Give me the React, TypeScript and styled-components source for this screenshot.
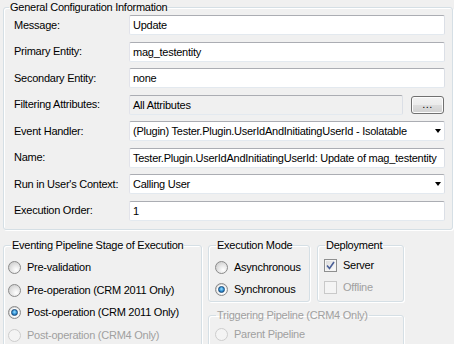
import type { FC, ReactNode } from 'react';
import styled, { createGlobalStyle } from 'styled-components';

const GlobalStyle = createGlobalStyle`
  html, body {
    margin: 0;
    padding: 0;
    background: #f0f0f0;
  }
  body {
    font-family: "Liberation Sans", Arial, sans-serif;
    font-size: 11px;
    letter-spacing: -0.25px;
    color: #000;
  }
`;

const Page = styled.div`
  width: 454px;
  height: 344px;
  overflow: hidden;
  box-sizing: border-box;
  padding: 1px 1px 0 3px;
  background: #f0f0f0;
`;

const Group = styled.fieldset<{ $width?: number }>`
  margin: 0;
  padding: 0;
  min-width: 0;
  box-sizing: border-box;
  border: 1px solid #d5dfe5;
  border-radius: 3px;
  box-shadow: inset 1px 1px 0 #fff, 1px 1px 0 #fff;
  ${(p) => (p.$width ? `width: ${p.$width}px; flex: none;` : '')}
`;

const Legend = styled.legend<{ $indent?: number; $disabled?: boolean }>`
  margin-left: ${(p) => p.$indent ?? 7}px;
  padding: 0 1px;
  line-height: 13px;
  height: 13px;
  color: ${(p) => (p.$disabled ? '#a0a0a0' : '#000')};
`;

const FormGrid = styled.div`
  display: grid;
  grid-template-columns: 115px 1fr;
  grid-auto-rows: 20px;
  row-gap: 6.5px;
  padding: 1px 7px 8px 10px;
  align-items: center;
`;

const Label = styled.div`
  line-height: 13px;
  white-space: nowrap;
`;

const TextBox = styled.div<{ $readOnly?: boolean }>`
  height: 20px;
  box-sizing: border-box;
  border: 1px solid;
  border-color: #abadb3 #dbdfe6 #e3e9ef #e2e3ea;
  border-radius: 2px;
  background: ${(p) => (p.$readOnly ? '#f0f0f0' : '#fff')};
  padding: 0 3px;
  display: flex;
  align-items: center;
  white-space: nowrap;
  overflow: hidden;
  min-width: 0;
  flex: 1;
`;

const ComboBox = styled(TextBox)`
  justify-content: space-between;
  padding-right: 3px;
`;

const Arrow = styled.span`
  width: 0;
  height: 0;
  border-left: 3.5px solid transparent;
  border-right: 3.5px solid transparent;
  border-top: 4px solid #000;
  flex: none;
`;

const Inline = styled.div`
  display: flex;
  align-items: center;
  gap: 8px;
  min-width: 0;
`;

const Button = styled.div`
  flex: none;
  width: 33px;
  height: 18px;
  margin-right: 1px;
  box-sizing: border-box;
  border: 1px solid #707070;
  border-radius: 3px;
  background: linear-gradient(#f2f2f2 0%, #ebebeb 50%, #dddddd 51%, #cfcfcf 100%);
  box-shadow: inset 0 0 0 1px #fcfcfc;
  text-align: center;
  line-height: 15px;
  letter-spacing: 0.5px;
`;

const Bottom = styled.div`
  display: flex;
  gap: 6px;
  margin-top: 9px;
  align-items: flex-start;
`;

const RightColumn = styled.div`
  display: flex;
  flex-direction: column;
  gap: 7px;
  width: 196px;
  flex: none;
`;

const TopRow = styled.div`
  display: flex;
  gap: 7px;
`;

const OptionList = styled.div<{ $padTop: number; $padLeft: number; $padBottom?: number; $row: number }>`
  display: grid;
  grid-auto-rows: ${(p) => p.$row}px;
  padding: ${(p) => p.$padTop}px 4px ${(p) => p.$padBottom ?? 0}px ${(p) => p.$padLeft}px;
  align-items: center;
`;

const Option = styled.div<{ $disabled?: boolean }>`
  display: flex;
  align-items: center;
  gap: 6px;
  white-space: nowrap;
  color: ${(p) => (p.$disabled ? '#a0a0a0' : '#000')};
  line-height: 13px;
`;

const RadioCircle = styled.span<{ $checked?: boolean; $disabled?: boolean }>`
  flex: none;
  width: 13px;
  height: 13px;
  box-sizing: border-box;
  border-radius: 50%;
  border: 1px solid ${(p) => (p.$disabled ? '#cdcdcd' : '#8a8a8a')};
  background: ${(p) =>
    p.$disabled
      ? '#f4f4f4'
      : 'radial-gradient(circle at 65% 70%, #ffffff 0%, #e6e6e6 45%, #c4c4c4 100%)'};
  display: flex;
  align-items: center;
  justify-content: center;

  &::after {
    content: '';
    display: ${(p) => (p.$checked ? 'block' : 'none')};
    width: 7px;
    height: 7px;
    box-sizing: border-box;
    border-radius: 50%;
    border: 1px solid #1c4f7e;
    background: radial-gradient(circle at 50% 40%, #9be0ff 0%, #2f8fd4 55%, #0e4b86 100%);
    box-shadow: 0 0 0 1px #fff;
  }
`;

const CheckBox = styled.span<{ $checked?: boolean; $disabled?: boolean }>`
  flex: none;
  width: 13px;
  height: 13px;
  box-sizing: border-box;
  border: 1px solid ${(p) => (p.$disabled ? '#c9c9c9' : '#8e8f8f')};
  background: ${(p) =>
    p.$disabled ? '#f4f4f4' : 'linear-gradient(135deg, #d8d8d8 0%, #ececec 50%, #ffffff 100%)'};
  box-shadow: inset 0 0 0 1px #f4f4f4;
  display: flex;
  align-items: center;
  justify-content: center;
`;

interface RadioProps {
  label: string;
  checked?: boolean;
  disabled?: boolean;
}

const Radio: FC<RadioProps> = ({ label, checked, disabled }) => (
  <Option $disabled={disabled}>
    <RadioCircle $checked={checked} $disabled={disabled} />
    <span>{label}</span>
  </Option>
);

const Check: FC<RadioProps> = ({ label, checked, disabled }) => (
  <Option $disabled={disabled}>
    <CheckBox $checked={checked} $disabled={disabled}>
      {checked && (
        <svg width="9" height="9" viewBox="0 0 9 9">
          <path d="M1 4.5 L3.5 7.5 L8 1" fill="none" stroke="#4a5f97" strokeWidth="1.6" />
        </svg>
      )}
    </CheckBox>
    <span>{label}</span>
  </Option>
);

interface FieldProps {
  label: string;
  children: ReactNode;
}

const Field: FC<FieldProps> = ({ label, children }) => (
  <>
    <Label>{label}</Label>
    {children}
  </>
);

const App: FC = () => {
  return (
    <Page>
      <GlobalStyle />
      <Group>
        <Legend $indent={5}>General Configuration Information</Legend>
        <FormGrid>
          <Field label="Message:">
            <TextBox>Update</TextBox>
          </Field>
          <Field label="Primary Entity:">
            <TextBox>mag_testentity</TextBox>
          </Field>
          <Field label="Secondary Entity:">
            <TextBox>none</TextBox>
          </Field>
          <Field label="Filtering Attributes:">
            <Inline>
              <TextBox $readOnly>All Attributes</TextBox>
              <Button>...</Button>
            </Inline>
          </Field>
          <Field label="Event Handler:">
            <ComboBox>
              <span>(Plugin) Tester.Plugin.UserIdAndInitiatingUserId - Isolatable</span>
              <Arrow />
            </ComboBox>
          </Field>
          <Field label="Name:">
            <TextBox>Tester.Plugin.UserIdAndInitiatingUserId: Update of mag_testentity</TextBox>
          </Field>
          <Field label="Run in User's Context:">
            <ComboBox>
              <span>Calling User</span>
              <Arrow />
            </ComboBox>
          </Field>
          <Field label="Execution Order:">
            <TextBox>1</TextBox>
          </Field>
        </FormGrid>
      </Group>

      <Bottom>
        <Group $width={199}>
          <Legend>Eventing Pipeline Stage of Execution</Legend>
          <OptionList $padTop={5} $padLeft={4} $padBottom={20} $row={22.5}>
            <Radio label="Pre-validation" />
            <Radio label="Pre-operation (CRM 2011 Only)" />
            <Radio label="Post-operation (CRM 2011 Only)" checked />
            <Radio label="Post-operation (CRM4 Only)" disabled />
          </OptionList>
        </Group>

        <RightColumn>
          <TopRow>
            <Group $width={102}>
              <Legend>Execution Mode</Legend>
              <OptionList $padTop={5} $padLeft={6} $row={22}>
                <Radio label="Asynchronous" />
                <Radio label="Synchronous" checked />
              </OptionList>
            </Group>
            <Group $width={87}>
              <Legend>Deployment</Legend>
              <OptionList $padTop={3} $padLeft={6} $padBottom={2} $row={22}>
                <Check label="Server" checked />
                <Check label="Offline" disabled />
              </OptionList>
            </Group>
          </TopRow>
          <Group>
            <Legend $disabled>Triggering Pipeline (CRM4 Only)</Legend>
            <OptionList $padTop={1.5} $padLeft={6} $padBottom={20} $row={22}>
              <Radio label="Parent Pipeline" disabled />
            </OptionList>
          </Group>
        </RightColumn>
      </Bottom>
    </Page>
  );
};

export default App;
